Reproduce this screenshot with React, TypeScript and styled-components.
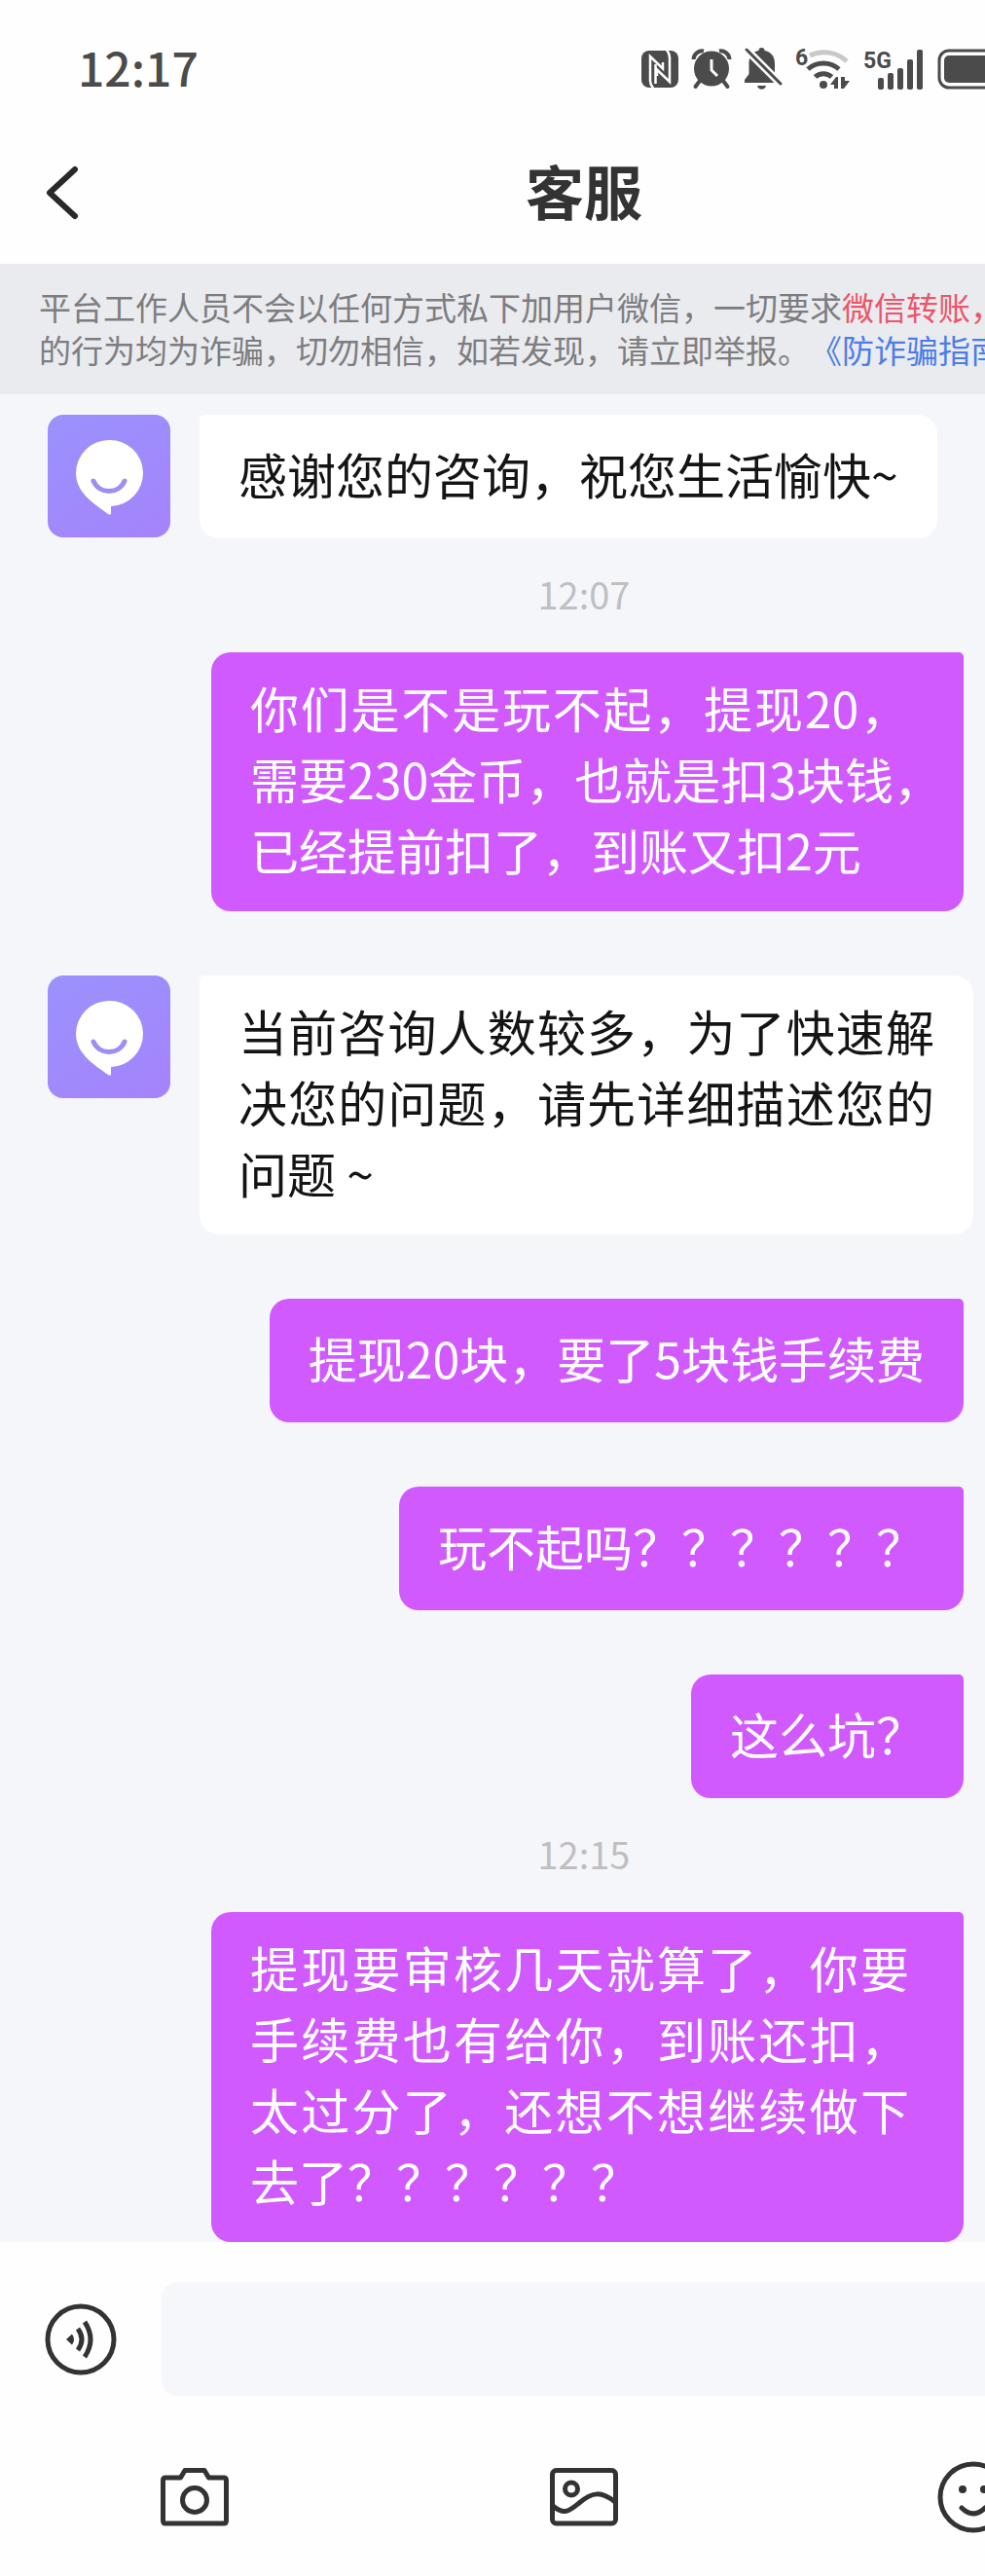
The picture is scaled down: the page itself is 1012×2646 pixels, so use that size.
import React from "react";
import styled, { createGlobalStyle, css } from "styled-components";

const GlobalStyle = createGlobalStyle`
  * { box-sizing: border-box; }
  body {
    margin: 0;
    background: #fefefe;
    overflow-x: hidden;
    font-family: "Noto Sans CJK SC", "Noto Sans", sans-serif;
  }
  button, input { font: inherit; }
`;

/* The phone screen runs on past the right edge of the visible page. */
const Viewport = styled.div`
  overflow: hidden;
`;

const Screen = styled.main`
  width: calc(100% + 188px);
  background: #fefefe;
`;

const StatusBar = styled.div`
  display: flex;
  align-items: center;
  justify-content: space-between;
  height: 125px;
  padding: 16px 137px 0 80px;
  color: #4b4b4b;
`;

const Clock = styled.time`
  padding-bottom: 6px;
  font-size: 48px;
  line-height: 56px;
  font-weight: 500;
`;

const StatusIcons = styled.div`
  display: flex;
  align-items: center;
  gap: 14px;

  svg { display: block; overflow: visible; }
`;

const NavBar = styled.header`
  display: grid;
  grid-template-columns: 120px 1fr 120px;
  align-items: center;
  height: 146px;
`;

const IconButton = styled.button`
  display: flex;
  align-items: center;
  justify-content: center;
  padding: 0;
  border: 0;
  background: none;
  color: #333;
  cursor: pointer;

  svg { display: block; }
`;

const BackButton = styled(IconButton)`
  width: 60px;
  height: 80px;
  margin-left: 34px;
  color: #28292b;
`;

const Title = styled.h1`
  margin: 0;
  padding-bottom: 6px;
  font-size: 60px;
  line-height: 72px;
  font-weight: 700;
  text-align: center;
  color: #333;
`;

const Notice = styled.p`
  margin: 0;
  padding: 22px 40px 24px;
  background: #eaebef;
  color: #7d7d80;
  font-size: 33px;
  line-height: 44px;
  text-spacing-trim: space-all;
`;

const Warning = styled.span`
  color: #eb556a;
`;

const GuideLink = styled.a`
  color: #4a7dea;
  text-decoration: none;
`;

const Conversation = styled.section`
  padding-top: 21px;
  background: #f5f6fa;
`;

const Group = styled.div`
  display: flex;
  flex-direction: column;
  gap: 66px;
`;

const TimeMark = styled.time`
  display: block;
  padding-bottom: 4px;
  font-size: 38px;
  line-height: 113px;
  text-align: center;
  color: #bfbfc1;
`;

const Row = styled.div<{ $mine?: boolean }>`
  display: flex;
  align-items: flex-start;
  gap: 30px;
  ${(p) =>
    p.$mine
      ? css`
          justify-content: flex-end;
          padding: 0 210px 0 217px;
        `
      : css`
          padding: 0 200px 0 49px;
        `}
`;

const Avatar = styled.div`
  flex: none;
  width: 126px;
  height: 126px;
  border-radius: 16px;
  background: linear-gradient(150deg, #9a92fd, #a583fb);

  svg { display: block; }
`;

const Bubble = styled.div<{ $mine?: boolean; $full?: boolean }>`
  display: flex;
  flex-direction: column;
  justify-content: center;
  flex: ${(p) => (p.$full ? "1" : "0 1 auto")};
  min-width: 0;
  min-height: 127px;
  padding: 20px ${(p) => (p.$full && p.$mine ? "56px" : "40px")} 27px 40px;
  font-size: 50px;
  line-height: 73px;
  color: ${(p) => (p.$mine ? "#fff" : "#141414")};
  background: ${(p) => (p.$mine ? "#d15aff" : "#fff")};
  border-radius: ${(p) => (p.$mine ? "20px 5px 20px 20px" : "5px 20px 20px 20px")};
`;

const Line = styled.span`
  display: block;
  white-space: nowrap;
  text-align: justify;
  text-align-last: justify;

  &:last-child {
    text-align-last: start;
  }
`;

const Composer = styled.form`
  display: flex;
  align-items: center;
  gap: 46px;
  padding: 41px 40px 0 46px;
`;

const MessageInput = styled.input`
  flex: 1;
  min-width: 0;
  height: 117px;
  padding: 0 32px;
  border: 0;
  border-radius: 16px;
  outline: 0;
  background: #f5f7fa;
  font-size: 50px;
`;

const Toolbar = styled.div`
  display: grid;
  grid-template-columns: repeat(3, 1fr);
  justify-items: center;
  padding: 64px 0 40px;
`;

const ToolButton = styled(IconButton)`
  width: 80px;
  height: 80px;
`;

const NfcIcon = () => (
  <svg width="38" height="38" viewBox="0 0 38 38" aria-hidden="true">
    <rect width="38" height="38" rx="8" fill="currentColor" />
    <path
      d="M12 38.500 Q9 35 9 31 V6 L22 18.500 V12 M26 -0.500 Q29 3 29 7 V32 L16 19.500 V26"
      fill="none"
      stroke="#fefefe"
      strokeWidth="2.500"
    />
    <path d="M14.500 14 V34" stroke="#fefefe" strokeWidth="2.500" />
  </svg>
);

const AlarmIcon = () => (
  <svg width="40" height="41" viewBox="0 0 40 41" aria-hidden="true">
    <circle cx="20" cy="20.500" r="18" fill="currentColor" />
    <path d="M1.500 11 A9 9 0 0 1 12 2.500 M28 2.500 A9 9 0 0 1 38.500 11" fill="none" stroke="currentColor" strokeWidth="4" />
    <path d="M8 33 L3.500 39 M32 33 L36.500 39" stroke="currentColor" strokeWidth="4" strokeLinecap="round" />
    <path d="M20 11 V22 L26 28" fill="none" stroke="#fefefe" strokeWidth="3" />
  </svg>
);

const MutedBellIcon = () => (
  <svg width="38" height="43" viewBox="0 0 38 43" aria-hidden="true">
    <path
      d="M17.500 0 C19.500 0 20.500 1 20.500 3 C27 4 31 9 31 16 V36 H0 V33 L4.500 27 V16 C4.500 9 8 4 14.500 3 C14.500 1 15.500 0 17.500 0Z"
      fill="currentColor"
    />
    <path d="M13 39 H22 C21 44 14 44 13 39Z" fill="currentColor" />
    <path d="M-1 -1 L40 40" stroke="#fefefe" strokeWidth="8" />
    <path d="M2 2 L37 37" stroke="currentColor" strokeWidth="3" strokeLinecap="round" />
  </svg>
);

const WifiIcon = () => (
  <svg width="56" height="44" viewBox="0 0 56 44" aria-hidden="true">
    <text x="0" y="18" fontFamily="Roboto, sans-serif" fontSize="23" fontWeight="700" fill="currentColor">6</text>
    <path d="M15 8 A34 34 0 0 1 53 14" fill="none" stroke="#c9c9c9" strokeWidth="5" />
    <path d="M13 22 A24 24 0 0 1 45 22" fill="none" stroke="currentColor" strokeWidth="5" />
    <path d="M20.500 30 A12.500 12.500 0 0 1 37.500 30" fill="none" stroke="currentColor" strokeWidth="5" />
    <circle cx="29" cy="38" r="4" fill="currentColor" />
    <path d="M44 30 V42 H40 V38 H36 L42 30 Z M47 30 H51 V34 H56 L50 42 H47 Z" fill="currentColor" />
  </svg>
);

const SignalIcon = () => (
  <svg width="62" height="42" viewBox="0 0 62 42" aria-hidden="true">
    <text x="0" y="20" fontFamily="Roboto, sans-serif" fontSize="23" fontWeight="700" fill="currentColor">5G</text>
    <g fill="currentColor">
      <rect x="15" y="30" width="6" height="12" rx="2" />
      <rect x="25" y="25" width="6" height="17" rx="2" />
      <rect x="35" y="20" width="6" height="22" rx="2" />
      <rect x="45" y="11" width="6" height="31" rx="2" />
      <rect x="55" y="1" width="6" height="41" rx="2" />
    </g>
  </svg>
);

const BatteryIcon = () => (
  <svg width="100" height="42" viewBox="0 0 100 42" aria-hidden="true">
    <rect x="2" y="2" width="92" height="38" rx="10" fill="none" stroke="currentColor" strokeWidth="3" />
    <rect x="7" y="7" width="82" height="28" rx="5" fill="currentColor" />
    <rect x="96" y="14" width="4" height="14" rx="2" fill="currentColor" />
  </svg>
);

const BackIcon = () => (
  <svg width="34" height="56" viewBox="0 0 34 56" aria-hidden="true">
    <path d="M30 4 L4 28 L30 52" fill="none" stroke="currentColor" strokeWidth="6" strokeLinecap="round" strokeLinejoin="round" />
  </svg>
);

const VoiceIcon = () => (
  <svg width="74" height="74" viewBox="0 0 74 74" fill="none" stroke="currentColor" aria-hidden="true">
    <circle cx="37" cy="37" r="34" strokeWidth="5" />
    <path d="M22 37 L28 31.500 Q32 37 28 42.500 Z" fill="currentColor" stroke="none" />
    <path d="M34 26 Q42 37 34 48 M41 19 Q53 37 41 55" strokeWidth="5" />
  </svg>
);

const CameraIcon = () => (
  <svg width="72" height="74" viewBox="0 0 72 74" fill="none" stroke="currentColor" strokeWidth="5" strokeLinejoin="round" aria-hidden="true">
    <path d="M6 17 H21.500 L26 9.500 H46 L50.500 17 H66 Q68.500 17 68.500 20 V61 Q68.500 64 66 64 H6 Q3.500 64 3.500 61 V20 Q3.500 17 6 17 Z" />
    <circle cx="36" cy="40" r="12.500" />
  </svg>
);

const PhotoIcon = () => (
  <svg width="72" height="74" viewBox="0 0 72 74" fill="none" stroke="currentColor" strokeWidth="5" aria-hidden="true">
    <rect x="3.500" y="9.500" width="65" height="54.500" rx="4" />
    <circle cx="23" cy="28.500" r="6.500" />
    <path d="M4 46 C16 56 21 51 31 43 C45 31 54 31 68 42" />
  </svg>
);

const SmileIcon = () => (
  <svg width="74" height="74" viewBox="0 0 74 74" fill="none" stroke="currentColor" aria-hidden="true">
    <circle cx="37" cy="37" r="34" strokeWidth="5" />
    <circle cx="26" cy="29" r="4" fill="currentColor" stroke="none" />
    <circle cx="48" cy="29" r="4" fill="currentColor" stroke="none" />
    <path d="M25 48 Q37 60 49 48" strokeWidth="5" strokeLinecap="round" />
  </svg>
);

const AgentAvatar = () => (
  <Avatar>
    <svg width="126" height="126" viewBox="0 0 126 126" role="img" aria-label="客服">
      <path d="M63 26 A34 34 0 0 1 65 94 V101 Q65 104 62 102 C52 94 29 82 29 60 A34 34 0 0 1 63 26 Z" fill="#fff" />
      <path d="M47 68 C53 82 73 82 79 68" fill="none" stroke="#a08df2" strokeWidth="5" strokeLinecap="round" />
    </svg>
  </Avatar>
);

type Message = { lines: string[]; mine?: boolean };
type MessageGroup = { time?: string; messages: Message[] };

const groups: MessageGroup[] = [
  { messages: [{ lines: ["感谢您的咨询，祝您生活愉快~"] }] },
  {
    time: "12:07",
    messages: [
      {
        mine: true,
        lines: ["你们是不是玩不起，提现20，", "需要230金币，也就是扣3块钱，", "已经提前扣了，到账又扣2元"],
      },
      { lines: ["当前咨询人数较多，为了快速解", "决您的问题，请先详细描述您的", "问题 ~"] },
      { mine: true, lines: ["提现20块，要了5块钱手续费"] },
      { mine: true, lines: ["玩不起吗？？？？？？"] },
      { mine: true, lines: ["这么坑？"] },
    ],
  },
  {
    time: "12:15",
    messages: [
      {
        mine: true,
        lines: ["提现要审核几天就算了，你要", "手续费也有给你，到账还扣，", "太过分了，还想不想继续做下", "去了？？？？？？"],
      },
    ],
  },
];

export default function App() {
  return (
    <Viewport lang="zh-CN">
      <GlobalStyle />
      <Screen>
        <StatusBar>
          <Clock>12:17</Clock>
          <StatusIcons>
            <NfcIcon />
            <AlarmIcon />
            <MutedBellIcon />
            <WifiIcon />
            <SignalIcon />
            <BatteryIcon />
          </StatusIcons>
        </StatusBar>
        <NavBar>
          <BackButton type="button" aria-label="返回">
            <BackIcon />
          </BackButton>
          <Title>客服</Title>
        </NavBar>
        <Notice>
          平台工作人员不会以任何方式私下加用户微信，一切要求<Warning>微信转账，</Warning>
          <br />
          的行为均为诈骗，切勿相信，如若发现，请立即举报。<GuideLink href="#guide">《防诈骗指南》</GuideLink>
        </Notice>
        <Conversation>
          {groups.map((group, i) => (
            <React.Fragment key={i}>
              {group.time && <TimeMark>{group.time}</TimeMark>}
              <Group>
                {group.messages.map(({ lines, mine }) => (
                  <Row key={lines[0]} $mine={mine}>
                    {!mine && <AgentAvatar />}
                    <Bubble $mine={mine} $full={lines.length > 1}>
                      {lines.map((line) => (
                        <Line key={line}>{line}</Line>
                      ))}
                    </Bubble>
                  </Row>
                ))}
              </Group>
            </React.Fragment>
          ))}
        </Conversation>
        <Composer onSubmit={(e) => e.preventDefault()}>
          <IconButton type="button" aria-label="语音">
            <VoiceIcon />
          </IconButton>
          <MessageInput type="text" aria-label="消息" />
        </Composer>
        <Toolbar>
          <ToolButton type="button" aria-label="拍照">
            <CameraIcon />
          </ToolButton>
          <ToolButton type="button" aria-label="图片">
            <PhotoIcon />
          </ToolButton>
          <ToolButton type="button" aria-label="表情">
            <SmileIcon />
          </ToolButton>
        </Toolbar>
      </Screen>
    </Viewport>
  );
}
